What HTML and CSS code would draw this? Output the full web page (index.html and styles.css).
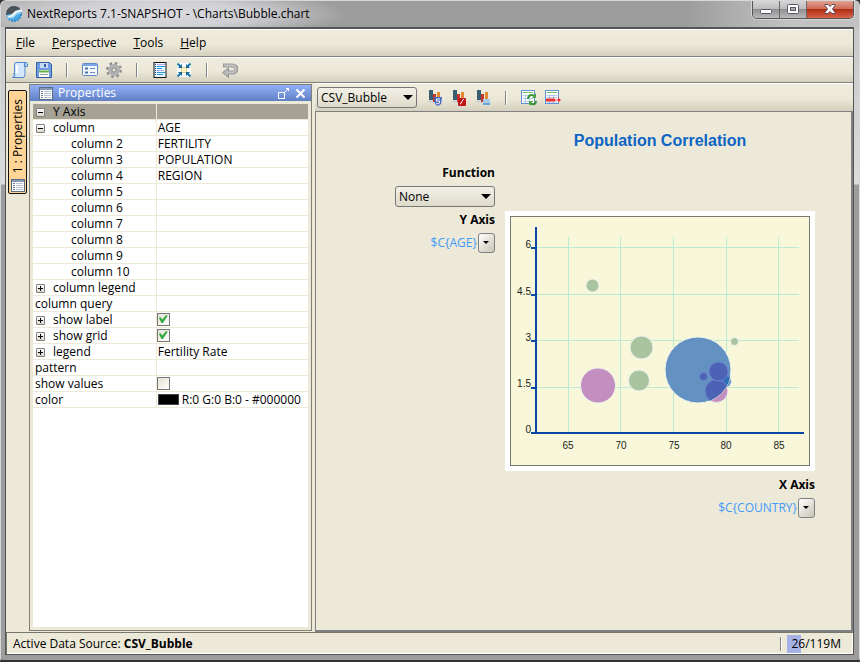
FILE: index.html
```
<!DOCTYPE html>
<html lang="en">
<head>
    <meta charset="UTF-8">
    <meta name="viewport" content="width=device-width, initial-scale=1.0">
    <title>NextReports 7.1-SNAPSHOT - \Charts\Bubble.chart</title>
    <link rel="stylesheet" href="styles.css">
</head>
<body>
<div class="window">
    <header class="titlebar">
        <svg class="app-icon" width="18" height="18" viewBox="0 0 18 18">
            <circle cx="9" cy="9" r="7" fill="#4aa8e4" stroke="#3a8fcb" stroke-width="2" stroke-dasharray="2 1"/>
            <path d="M1 10C1 4 5 1 9 1s7 3 7 5l-4-1-4 4-3 0z" fill="#4c5358"/>
            <path d="M2 11l4-1 4-4 7-2v3l-5 1-4 4-5 1z" fill="#eaf3f8"/>
            <path d="M3 13l5 0 4-4 4-1" fill="none" stroke="#8fd0f4"/>
        </svg>
        <h1>NextReports 7.1-SNAPSHOT - \Charts\Bubble.chart</h1>
        <div class="window-buttons">
            <button type="button" class="win-btn" aria-label="Minimize">
                <svg width="14" height="14" viewBox="0 0 14 14"><rect x="1.500" y="6.500" width="11" height="4" rx="1" fill="#fff" stroke="#555a66"/></svg>
            </button>
            <button type="button" class="win-btn" aria-label="Maximize">
                <svg width="14" height="14" viewBox="0 0 14 14"><rect x="1.500" y="1.500" width="11" height="9" rx="1" fill="#fff" stroke="#555a66"/><rect x="4.500" y="4.500" width="5" height="3" fill="#aaa" stroke="#555a66"/></svg>
            </button>
            <button type="button" class="win-btn win-close" aria-label="Close">
                <svg width="14" height="14" viewBox="0 0 14 14"><path d="M2 1.500h3l2 2 2-2h3v1L9.500 6l2.500 3.500v1H9L7 8.500l-2 2H2v-1L4.500 6 2 2.500z" fill="#fff" stroke="#5a4a52"/></svg>
            </button>
        </div>
    </header>

    <div class="frame">
        <nav class="menubar">
            <button type="button"><u>F</u>ile</button>
            <button type="button"><u>P</u>erspective</button>
            <button type="button"><u>T</u>ools</button>
            <button type="button"><u>H</u>elp</button>
        </nav>

        <div class="toolbar main-toolbar">
            <button type="button" aria-label="Open">
                <svg width="16" height="16" viewBox="0 0 16 16"><path d="M4 .5h11c-2 1-2 3-2 5v5c0 3 0 5-2 5H.5c2-1 2-3 2-5v-5c0-3 0-5 1.500-5z" fill="#d3e8fc" stroke="#4f88cc"/><path d="M12.500 1v3.500h3V1.500M1 15c2.500 0 2.500-3.500 0-3.500" fill="#a9cdf3" stroke="#4f88cc"/><path d="M5 3v8" stroke="#fff" stroke-width="2"/></svg>
            </button>
            <button type="button" aria-label="Save">
                <svg width="16" height="16" viewBox="0 0 16 16"><path d="M.5.5h13l2 2v13H.5z" fill="#6c9be0" stroke="#345ea8"/><rect x="4" y="1" width="8" height="5" fill="#c5d9f5"/><rect x="8" y="2" width="2" height="3" fill="#345ea8"/><rect x="3" y="8" width="10" height="7" fill="#fff"/><path d="M3 9.500h10" stroke="#65ad43" stroke-width="2"/><path d="M4 12.500h8" stroke="#999"/></svg>
            </button>
            <span class="separator"></span>
            <button type="button" aria-label="Properties view">
                <svg width="16" height="16" viewBox="0 0 16 16"><rect x=".5" y="1.500" width="15" height="12" rx="1" fill="#f4f8fe" stroke="#6289c4"/><path d="M1 3h14" stroke="#7ba5ea" stroke-width="2"/><path d="M3 6.500h3M3 10.500h3" stroke="#4a6fae" stroke-width="2"/><path d="M8 6.500h5M8 10.500h5" stroke="#6a8cc4"/></svg>
            </button>
            <button type="button" aria-label="Settings">
                <svg width="16" height="16" viewBox="0 0 16 16"><circle cx="8" cy="8" r="6.500" fill="none" stroke="#8c8c8c" stroke-width="3" stroke-dasharray="2.500 2.600"/><circle cx="8" cy="8" r="4" fill="none" stroke="#b0b0b0" stroke-width="4"/><circle cx="8" cy="8" r="2" fill="#eceade" stroke="#888"/></svg>
            </button>
            <span class="separator"></span>
            <button type="button" aria-label="Query editor">
                <svg width="16" height="16" viewBox="0 0 16 16"><rect x="2" y=".5" width="12" height="15" fill="#e8f6ff" stroke="#111"/><path d="M5 2.500h8M5 8.500h7" stroke="#c9a6e4"/><path d="M5 4.500h8M5 6.500h5M5 10.500h8M5 12.500h6" stroke="#2496dc"/><path d="M3.500 2v12" stroke="#124a9c" stroke-dasharray="1 1"/></svg>
            </button>
            <button type="button" aria-label="Fit">
                <svg width="16" height="16" viewBox="0 0 16 16"><path fill="#f8fbfd" d="M1 1h14v14H1z"/><rect x="5.500" y="5.500" width="5" height="5" fill="#fff5c8" stroke="#dccb8a"/><path d="M1.500 1.500L5 5M14.500 1.500L11 5M1.500 14.500L5 11M14.500 14.500L11 11" stroke="#1679ad" stroke-width="2"/><path d="M6 2v4H2zM10 2v4h4zM6 14v-4H2zM10 14v-4h4z" fill="#10699c"/></svg>
            </button>
            <span class="separator"></span>
            <button type="button" aria-label="Undo" disabled>
                <svg width="16" height="16" viewBox="0 0 16 16"><path d="M1 3.500h9c6 0 6 7 0 7H6" fill="none" stroke="#999" stroke-width="4"/><path d="M6.500 6v9.500L.5 10.500z" fill="#b4b4b4" stroke="#929292"/><path d="M2 3.500h8c5 0 5 7 0 7H4" fill="none" stroke="#c2c2c2" stroke-width="2"/></svg>
            </button>
        </div>

        <main class="workspace">
            <aside class="dock">
                <button type="button" class="dock-tab">
                    <span>1 : Properties</span>
                    <svg width="14" height="13" viewBox="0 0 14 13"><rect x=".5" y=".5" width="13" height="12" fill="#fff" stroke="#5c6c84"/><path d="M1 2h12" stroke="#8698b4" stroke-width="2"/><path d="M2 4.500h2M2 6.500h2M2 8.500h2M2 10.500h2" stroke="#667a9c"/><path d="M5 4.500h7M5 6.500h7M5 8.500h7M5 10.500h7" stroke="#b4c2d6"/></svg>
                </button>
            </aside>

            <section class="properties">
                <div class="properties-header">
                    <svg width="14" height="13" viewBox="0 0 14 13"><rect x=".5" y=".5" width="13" height="12" fill="#fff" stroke="#5c6c84"/><path d="M1 2h12" stroke="#8698b4" stroke-width="2"/><path d="M2 4.500h2M2 6.500h2M2 8.500h2M2 10.500h2" stroke="#667a9c"/><path d="M5 4.500h7M5 6.500h7M5 8.500h7M5 10.500h7" stroke="#b4c2d6"/></svg>
                    <h2>Properties</h2>
                    <button type="button" aria-label="Detach">
                        <svg width="13" height="13" viewBox="0 0 13 13" fill="none" stroke="#fff"><path d="M7.500 5v7"/><path d="M8 5.500H1.500v6h6V7M8 5l4-4M9 1.500h2.500V4"/></svg>
                    </button>
                    <button type="button" aria-label="Close panel">
                        <svg width="11" height="13" viewBox="0 0 11 13" fill="none" stroke="#fff" stroke-width="2"><path d="M1.500 2.500l8 8M9.500 2.500l-8 8"/></svg>
                    </button>
                </div>
                <div class="properties-body">
                    <table class="props">
                        <tbody>
                            <tr class="group"><th scope="row"><button type="button" class="toggle open" aria-label="Collapse"></button>Y Axis</th><td></td></tr>
                            <tr><th scope="row"><button type="button" class="toggle open" aria-label="Collapse"></button>column</th><td>AGE</td></tr>
                            <tr><th scope="row" class="child">column 2</th><td>FERTILITY</td></tr>
                            <tr><th scope="row" class="child">column 3</th><td>POPULATION</td></tr>
                            <tr><th scope="row" class="child">column 4</th><td>REGION</td></tr>
                            <tr><th scope="row" class="child">column 5</th><td></td></tr>
                            <tr><th scope="row" class="child">column 6</th><td></td></tr>
                            <tr><th scope="row" class="child">column 7</th><td></td></tr>
                            <tr><th scope="row" class="child">column 8</th><td></td></tr>
                            <tr><th scope="row" class="child">column 9</th><td></td></tr>
                            <tr><th scope="row" class="child">column 10</th><td></td></tr>
                            <tr><th scope="row"><button type="button" class="toggle" aria-label="Expand"></button>column legend</th><td></td></tr>
                            <tr><th scope="row">column query</th><td></td></tr>
                            <tr><th scope="row"><button type="button" class="toggle" aria-label="Expand"></button><label for="show-label">show label</label></th><td class="check-cell"><input type="checkbox" id="show-label" checked></td></tr>
                            <tr><th scope="row"><button type="button" class="toggle" aria-label="Expand"></button><label for="show-grid">show grid</label></th><td class="check-cell"><input type="checkbox" id="show-grid" checked></td></tr>
                            <tr><th scope="row"><button type="button" class="toggle" aria-label="Expand"></button>legend</th><td>Fertility Rate</td></tr>
                            <tr><th scope="row">pattern</th><td></td></tr>
                            <tr><th scope="row"><label for="show-values">show values</label></th><td class="check-cell"><input type="checkbox" id="show-values"></td></tr>
                            <tr><th scope="row">color</th><td><span class="swatch"></span>R:0 G:0 B:0 - #000000</td></tr>
                        </tbody>
                    </table>
                </div>
            </section>

            <section class="editor">
                <div class="toolbar chart-toolbar">
                    <div class="select">
                        <select aria-label="Chart">
                            <option>CSV_Bubble</option>
                        </select>
                    </div>
                    <button type="button" aria-label="HTML5 chart">
                        <svg width="16" height="16" viewBox="0 0 16 16"><path d="M0 11l4-2h11v4H5z" fill="#d0d5da"/><path d="M2 0h4v10H2z" fill="#3d5d70"/><path d="M6 4h3v8H6z" fill="#c4372a"/><path d="M10 2h3v8h-3z" fill="#e08a32"/><path d="M7 7h8l-1 7-3 2-3-2z" fill="#4668c6"/><path d="M13 9H9.500v2h3v2l-1.500 1-2-1" fill="none" stroke="#fff"/></svg>
                    </button>
                    <button type="button" aria-label="Flash chart">
                        <svg width="16" height="16" viewBox="0 0 16 16"><path d="M0 11l4-2h11v4H5z" fill="#d0d5da"/><path d="M2 0h4v10H2z" fill="#3d5d70"/><path d="M6 4h3v8H6z" fill="#c4372a"/><path d="M10 2h3v8h-3z" fill="#e08a32"/><rect x="7" y="8" width="8" height="8" rx="1" fill="#c01818"/><path d="M13 9c-2 0-2 5-4 5" fill="none" stroke="#fff"/></svg>
                    </button>
                    <button type="button" aria-label="Image chart">
                        <svg width="16" height="16" viewBox="0 0 16 16"><path d="M0 11l4-2h11v4H5z" fill="#d0d5da"/><path d="M2 0h4v10H2z" fill="#3d5d70"/><path d="M6 4h3v8H6z" fill="#c4372a"/><path d="M10 2h3v8h-3z" fill="#e08a32"/><rect x="8" y="9" width="7" height="6" fill="#a9cdee"/><path d="M8 13h7v2H8z" fill="#6fa3d6"/></svg>
                    </button>
                    <span class="separator"></span>
                    <button type="button" aria-label="Refresh data">
                        <svg width="16" height="16" viewBox="0 0 16 16"><rect x=".5" y=".5" width="13" height="13" fill="#fff" stroke="#5f93d4"/><path d="M2 2.500h10" stroke="#7cbd5c"/><path d="M2 5.500h10M2 8.500h10M2 11.500h10M4.500 5v8M8.500 5v8" stroke="#b4ccec"/><path d="M7 9c0-4 4-5 6-3M15 11c0 4-4 4-6 2" fill="none" stroke="#3c9439" stroke-width="2"/><path d="M15 3v5h-4zM8 16v-5h4z" fill="#4ca744"/></svg>
                    </button>
                    <button type="button" aria-label="Export data">
                        <svg width="16" height="16" viewBox="0 0 16 16"><rect x=".5" y=".5" width="13" height="13" fill="#fff" stroke="#5f93d4"/><path d="M2 2.500h10" stroke="#7cbd5c"/><path d="M2 5.500h10M2 7.500h10M2 12h10M4.500 5v8M8.500 5v8" stroke="#a9c4ea"/><path d="M1 10h9" stroke="#f03030" stroke-width="3"/><path d="M10 10h4" stroke="#f03030"/><path d="M13 7.500l3 2.500-3 2.500z" fill="#f03030"/></svg>
                    </button>
                </div>

                <div class="canvas">
                    <h2 class="chart-title">Population Correlation</h2>
                    <div class="y-controls">
                        <label class="axis-label" for="function">Function</label>
                        <div class="select">
                            <select id="function">
                                <option>None</option>
                            </select>
                        </div>
                        <span class="axis-label">Y Axis</span>
                        <div class="axis-value">
                            <span>$C{AGE}</span>
                            <button type="button" class="drop" aria-label="Change Y axis"></button>
                        </div>
                    </div>
                    <svg class="chart" width="310" height="260" viewBox="0 0 310 260" role="img" aria-label="Bubble chart">
                        <defs>
                            <clipPath id="big-bubble"><circle cx="193" cy="159" r="33"/></clipPath>
                        </defs>
                        <rect width="310" height="260" fill="#fff"/>
                        <rect x="5.500" y="5.500" width="299" height="249" fill="#f8f7d9" stroke="#777"/>
                        <g class="grid">
                            <path d="M63.500 26v196M115.500 26v196M168.500 26v196M221.500 26v196M273.500 26v196"/>
                            <path d="M32 36.500h262M32 83.500h262M32 129.500h262M32 176.500h262"/>
                        </g>
                        <g class="axes">
                            <path d="M31 16v207M26 222h273M26 37h5M26 84h5M26 130h5M26 177h5"/>
                        </g>
                        <g class="ticks-y">
                            <text x="26" y="37">6</text>
                            <text x="26" y="84">4.5</text>
                            <text x="26" y="130">3</text>
                            <text x="26" y="176">1.5</text>
                            <text x="26" y="222">0</text>
                        </g>
                        <g class="ticks-x">
                            <text x="63" y="238">65</text>
                            <text x="116" y="238">70</text>
                            <text x="169" y="238">75</text>
                            <text x="221" y="238">80</text>
                            <text x="274" y="238">85</text>
                        </g>
                        <g class="bubbles">
                            <circle cx="87.500" cy="74.500" r="6.500" fill="#aac4a0"/>
                            <circle cx="136.500" cy="136.500" r="11.500" fill="#aac4a0"/>
                            <circle cx="134" cy="169.500" r="10.500" fill="#aac4a0"/>
                            <circle cx="229.500" cy="130.500" r="4" fill="#aac4a0"/>
                            <circle cx="93" cy="174.500" r="17.500" fill="#c38fc0"/>
                            <circle cx="211.500" cy="180" r="11.500" fill="#c38fc0"/>
                            <circle cx="220.500" cy="170.500" r="6" fill="#5c93cb"/>
                            <circle cx="193" cy="159" r="33" fill="#6391c2"/>
                        </g>
                        <g clip-path="url(#big-bubble)" stroke="#6c83cb">
                            <circle cx="220.500" cy="170.500" r="6" fill="#2f6fb8"/>
                            <circle cx="211.500" cy="180" r="11.500" fill="#4c62b4"/>
                            <circle cx="213.500" cy="160.500" r="9.500" fill="#4c62b4"/>
                            <circle cx="198.500" cy="165.500" r="4" fill="#4c62b4"/>
                        </g>
                    </svg>
                    <div class="x-controls">
                        <span class="axis-label">X Axis</span>
                        <div class="axis-value">
                            <span>$C{COUNTRY}</span>
                            <button type="button" class="drop" aria-label="Change X axis"></button>
                        </div>
                    </div>
                </div>
            </section>
        </main>

        <footer class="statusbar">
            <span>Active Data Source: <b>CSV_Bubble</b></span>
            <span class="separator"></span>
            <span class="memory">26/119M</span>
        </footer>
    </div>
</div>
</body>
</html>
```
FILE: styles.css
```
* {
    box-sizing: border-box;
}

body {
    margin: 0;
    font-family: "Open Sans", "Noto Sans", sans-serif;
    font-size: 12px;
    line-height: 16px;
    color: #000;
    background: #333;
}

button {
    font: inherit;
    color: inherit;
    border: none;
    background: none;
    padding: 0;
}

h1, h2 {
    margin: 0;
    font-size: 12px;
    font-weight: normal;
}

svg {
    display: block;
}

.window {
    display: flex;
    flex-direction: column;
    min-height: 100vh;
    padding: 0 5px 5px 4px;
    border: 1px solid #d8d8d8;
    border-bottom: 2px solid #333;
    border-radius: 6px 6px 4px 4px;
    background: linear-gradient(#c4c4c4, #dcdcdc 183px, #9d9d9d 184px);
}

/* title bar */
.titlebar {
    display: flex;
    align-items: center;
    gap: 4px;
    height: 26px;
    margin: 0 -5px 0 -4px;
    padding: 0 5px 0 4px;
    border-radius: 6px 6px 0 0;
    background:
        radial-gradient(ellipse 190px 26px at 155px 13px, #dcdce0, #d0d0d4 50%, transparent),
        linear-gradient(to right, #b0b0b0, #9d9d9d 35%, #9d9d9d 80%, #c2c2c2 92%);
}

.titlebar h1 {
    flex: 1;
}

.window-buttons {
    display: flex;
    align-self: flex-start;
    height: 18px;
    border: 1px solid #55555a;
    border-top: none;
    border-radius: 0 0 5px 5px;
    overflow: hidden;
    box-shadow: 0 0 0 1px #d6d6d6;
}

.win-btn {
    display: flex;
    align-items: center;
    justify-content: center;
    width: 27px;
    border-right: 1px solid #66666a;
    background: linear-gradient(#d6d6d6, #bcbcbc 45%, #919194 50%, #bababa);
}

.win-close {
    width: 46px;
    border-right: none;
    background: linear-gradient(#e0a294, #cf6a55 45%, #b12e16 50%, #d8644a);
}

.frame {
    display: flex;
    flex: 1;
    flex-direction: column;
    border: 1px solid #555;
    border-top-width: 2px;
    background: #ece9d8;
}

/* bars */
.menubar, .toolbar {
    display: flex;
    align-items: center;
    border-top: 1px solid #fff;
    border-bottom: 1px solid #808080;
    background: linear-gradient(#efecde, #ebe8d8 55%, #d4d0c0);
}

.menubar {
    gap: 17px;
    height: 28px;
    padding: 0 10px;
}

.toolbar {
    gap: 8px;
}

.main-toolbar {
    height: 26px;
    padding: 0 6px;
}

.separator {
    width: 2px;
    height: 14px;
    border-left: 1px solid #808080;
    border-right: 1px solid #fff;
}

.toolbar .separator {
    margin: 0 6px;
}

.workspace {
    display: flex;
    flex: 1;
}

.dock {
    width: 23px;
    padding: 7px 2px;
}

.dock-tab {
    display: flex;
    flex-direction: column;
    align-items: center;
    gap: 6px;
    width: 19px;
    padding: 8px 0 1px;
    border: 1px solid #111;
    border-radius: 2px;
    background: #ffd597;
}

.dock-tab span {
    writing-mode: vertical-rl;
    transform: rotate(180deg);
}

/* properties panel */
.properties {
    display: flex;
    flex-direction: column;
    flex: 0 1 283px;
    margin: 1px 3px 1px 0;
    border: 1px solid #808078;
}

.properties-header {
    display: flex;
    align-items: center;
    gap: 5px;
    height: 16px;
    padding: 0 5px 0 9px;
    color: #fff;
    background: linear-gradient(#92b0f8, #6080c4);
}

.properties-header h2 {
    flex: 1;
}

.properties-body {
    flex: 1;
    margin: 3px;
    background: #fff;
}

.props {
    width: 100%;
    border-collapse: separate;
    border-spacing: 0;
    table-layout: fixed;
}

.props th, .props td {
    height: 16px;
    padding: 0 1px;
    border-bottom: 1px solid #ece9d8;
    line-height: 15px;
    text-align: left;
    font-weight: normal;
    white-space: nowrap;
}

.props th {
    width: 45%;
    padding-left: 2px;
    border-right: 1px solid #ece9d8;
}

.props .child {
    padding-left: 38px;
}

.props .group {
    background: #a5a195;
}

.toggle {
    position: relative;
    width: 9px;
    height: 9px;
    margin: 0 8px 0 1px;
    border: 1px solid #808080;
    border-radius: 1px;
    background: linear-gradient(#fff, #dcd9cc);
}

.toggle::before, .toggle::after {
    content: "";
    position: absolute;
    top: 3px;
    left: 1px;
    width: 5px;
    height: 1px;
    background: #000;
}

.toggle::after {
    transform: rotate(90deg);
}

.toggle.open::after {
    display: none;
}

.props .check-cell {
    padding: 0;
}

.check-cell input {
    appearance: none;
    display: block;
    width: 13px;
    height: 13px;
    margin: 0;
    border: 1px solid #777;
    background: linear-gradient(135deg, #e4e1d2, #fff);
}

.check-cell input:checked::before {
    content: "";
    display: block;
    width: 9px;
    height: 8px;
    margin: 1px;
    background: #39a845;
    clip-path: polygon(0 30%, 25% 30%, 40% 55%, 80% 0, 100% 10%, 45% 100%, 30% 100%);
}

.swatch {
    display: inline-block;
    width: 21px;
    height: 11px;
    margin-right: 3px;
    border: 1px solid #444;
    vertical-align: -1px;
    background: #000;
}

/* editor */
.editor {
    display: flex;
    flex: 1;
    flex-direction: column;
    min-width: 0;
}

.chart-toolbar {
    height: 28px;
    padding: 0 2px;
    border-bottom: none;
}

.chart-toolbar .select {
    margin-right: 2px;
}

.select {
    position: relative;
    width: 100px;
}

.select::after, .drop::after {
    content: "";
    position: absolute;
    top: 8px;
    right: 4px;
    border: 5px solid transparent;
    border-top-color: #000;
    border-bottom: none;
    pointer-events: none;
}

select {
    appearance: none;
    display: block;
    width: 100%;
    height: 21px;
    padding: 0 3px;
    border: 1px solid #777;
    border-radius: 3px;
    font: inherit;
    color: #000;
    background: linear-gradient(#f3f1e7, #dedacb);
}

.canvas {
    display: grid;
    flex: 1;
    grid-template-columns: 1fr 310px;
    grid-template-rows: 99px auto 1fr;
    column-gap: 10px;
    padding-right: 36px;
    border: 1px solid #808080;
    border-right-width: 2px;
    border-bottom-width: 2px;
}

.chart-title {
    grid-column: 2;
    padding-top: 20px;
    font: bold 16px/18px "Liberation Sans", Arial, sans-serif;
    text-align: center;
    color: #0d65c4;
}

.y-controls {
    display: flex;
    grid-row: 1 / 3;
    grid-column: 1;
    flex-direction: column;
    align-items: flex-end;
    gap: 5px;
    padding-top: 53px;
}

.x-controls {
    display: flex;
    grid-column: 2;
    flex-direction: column;
    align-items: flex-end;
    gap: 5px;
    padding-top: 6px;
}

.axis-label {
    font-weight: bold;
}

.axis-value {
    display: flex;
    align-items: center;
    gap: 1px;
    color: #3f9bfd;
}

.drop {
    position: relative;
    width: 17px;
    height: 20px;
    border: 1px solid #808080;
    border-radius: 3px;
    background: linear-gradient(135deg, #fff, #c9c5b4);
}

.drop::after {
    top: 7px;
    right: 5px;
    border-width: 3px;
    border-bottom: none;
}

/* chart */
.chart .grid path {
    fill: none;
    stroke: #bcebcf;
}

.chart .axes path {
    fill: none;
    stroke: #0a47a5;
    stroke-width: 2;
}

.chart text {
    font: 10px "Liberation Sans", Arial, sans-serif;
    fill: #222;
}

.ticks-y {
    text-anchor: end;
}

.ticks-x {
    text-anchor: middle;
}

.bubbles {
    stroke: #eef3ee;
}

/* status bar */
.statusbar {
    display: flex;
    align-items: center;
    gap: 5px;
    height: 22px;
    padding: 0 2px 0 6px;
    border: 1px solid #77776c;
    border-width: 1px 0 0 1px;
    box-shadow: inset -1px -1px #fff;
}

.statusbar span:first-child {
    flex: 1;
}

.memory {
    width: 64px;
    height: 18px;
    padding-right: 10px;
    line-height: 18px;
    text-align: right;
    background: linear-gradient(to right, #a6b2e6 22%, transparent 22%);
}
```
